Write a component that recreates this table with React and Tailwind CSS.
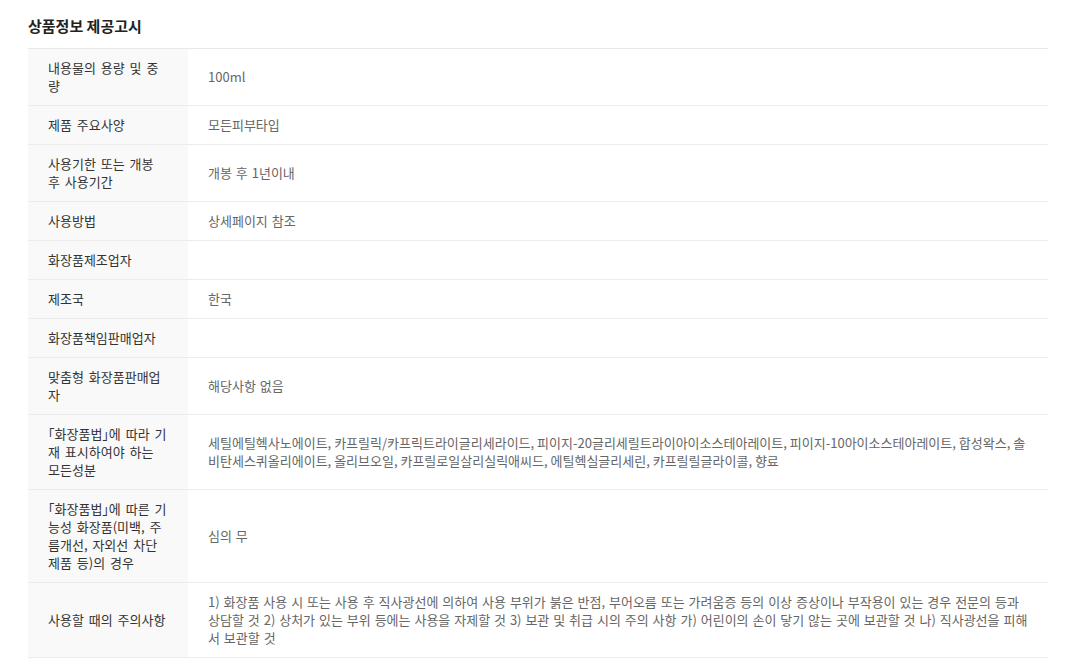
import React from "react";

const rows = [
  ["내용물의 용량 및 중량", "100ml"],
  ["제품 주요사양", "모든피부타입"],
  ["사용기한 또는 개봉 후 사용기간", "개봉 후 1년이내"],
  ["사용방법", "상세페이지 참조"],
  ["화장품제조업자", ""],
  ["제조국", "한국"],
  ["화장품책임판매업자", ""],
  ["맞춤형 화장품판매업자", "해당사항 없음"],
  [
    "「화장품법」에 따라 기재 표시하여야 하는 모든성분",
    "세틸에틸헥사노에이트, 카프릴릭/카프릭트라이글리세라이드, 피이지-20글리세릴트라이아이소스테아레이트, 피이지-10아이소스테아레이트, 합성왁스, 솔비탄세스퀴올리에이트, 올리브오일, 카프릴로일살리실릭애씨드, 에틸헥실글리세린, 카프릴릴글라이콜, 향료",
    true,
  ],
  [
    "「화장품법」에 따른 기능성 화장품(미백, 주름개선, 자외선 차단제품 등)의 경우",
    "심의 무",
  ],
  [
    "사용할 때의 주의사항",
    "1) 화장품 사용 시 또는 사용 후 직사광선에 의하여 사용 부위가 붉은 반점, 부어오름 또는 가려움증 등의 이상 증상이나 부작용이 있는 경우 전문의 등과 상담할 것 2) 상처가 있는 부위 등에는 사용을 자제할 것 3) 보관 및 취급 시의 주의 사항 가) 어린이의 손이 닿기 않는 곳에 보관할 것 나) 직사광선을 피해서 보관할 것",
  ],
];

export default function App() {
  return (
    <div
      className="min-h-[663px] w-full bg-white px-[28px]"
      style={{ fontFamily: '"Noto Sans CJK KR", "Noto Sans", sans-serif' }}
    >
      <h2 className="pt-[16px] pb-[12px] text-[15px] leading-[20px] font-bold text-[#222]">
        상품정보 제공고시
      </h2>
      <div className="w-[1020px] border-t border-[#e8e8e8]">
        {rows.map(([label, value, tight], i) => (
          <div key={i} className="flex border-b border-[#ececec]">
            <div className="w-[160px] shrink-0 bg-[#f9f9f9] px-[20px] py-[10px] text-[13px] leading-[18px] text-[#333] flex items-center [word-spacing:2px] [font-feature-settings:'halt']">
              <span className="break-all">{label}</span>
            </div>
            <div
              className={
                tight
                  ? "flex-1 pl-[20px] pr-[18px] py-[10px] text-[13px] leading-[18px] text-[#666] flex items-center [word-spacing:0px]"
                  : "flex-1 px-[20px] py-[10px] text-[13px] leading-[18px] text-[#666] flex items-center [word-spacing:1px]"
              }
            >
              <span>{value}</span>
            </div>
          </div>
        ))}
      </div>
    </div>
  );
}
